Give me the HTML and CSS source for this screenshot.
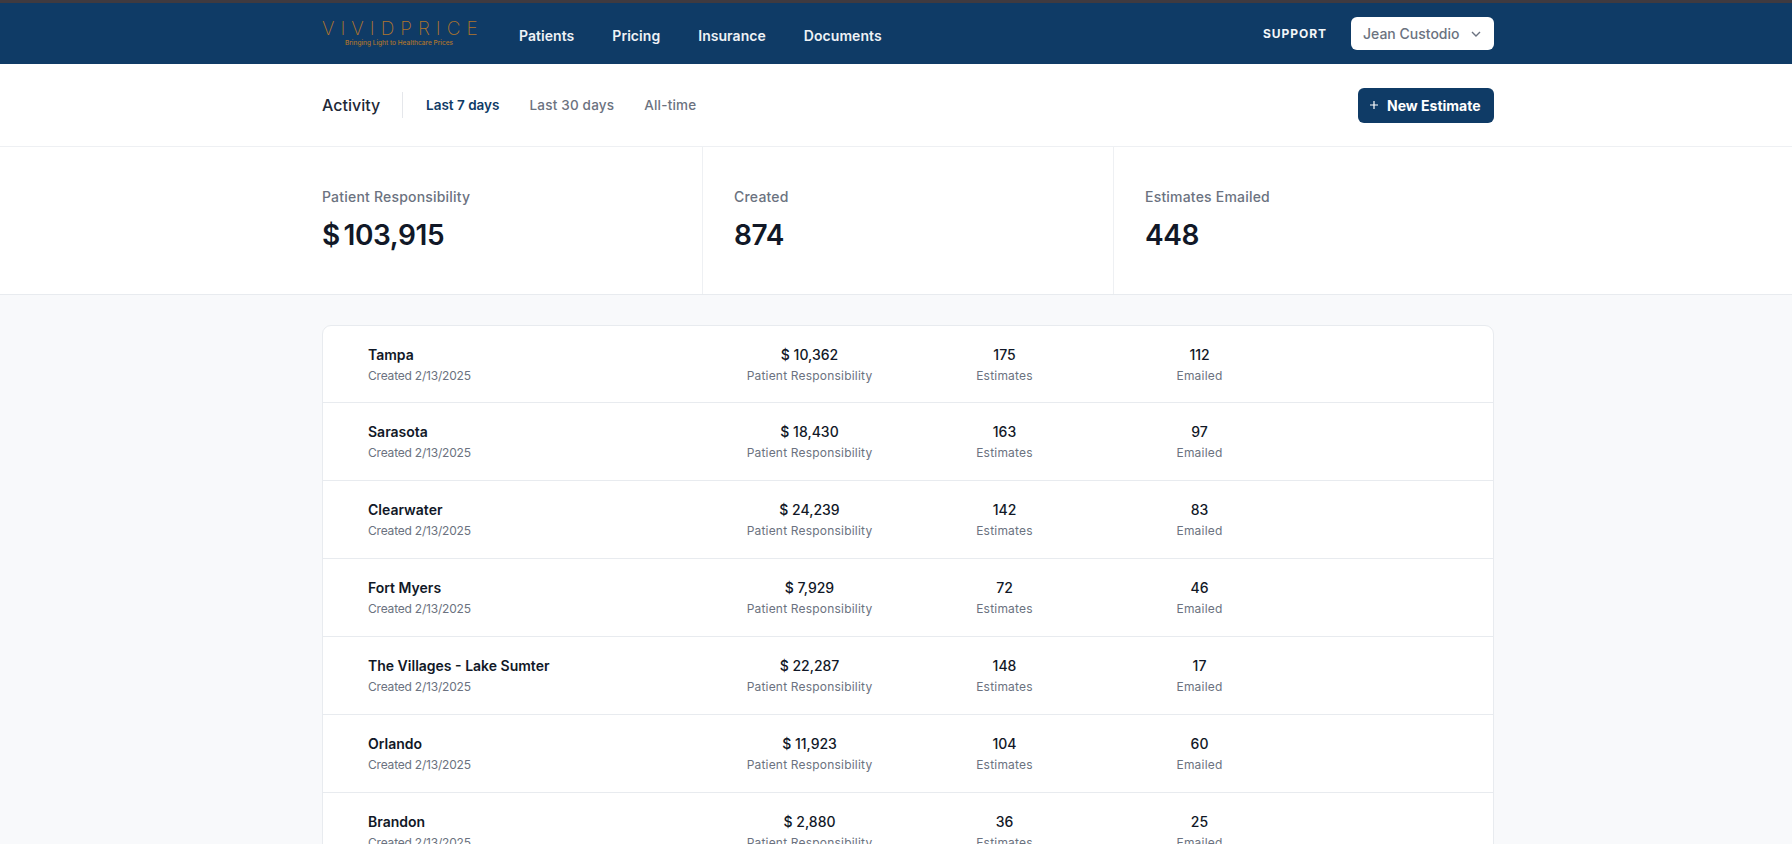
FILE: index.html
```html
<!DOCTYPE html>
<html lang="en">
<head>
<meta charset="utf-8">
<title>VividPrice</title>
<link rel="stylesheet" href="styles.css">
</head>
<body>
<header class="topbar">
  <div class="wrap topbar-in">
    <a class="logo">
      <span class="logo-name">VIVIDPRICE</span>
      <span class="logo-tag">Bringing Light to Healthcare Prices</span>
    </a>
    <nav class="nav">
      <a>Patients</a><a>Pricing</a><a>Insurance</a><a>Documents</a>
    </nav>
    <a class="support">SUPPORT</a>
    <button class="user">Jean Custodio
      <svg class="chev" viewBox="0 0 10 6" width="10" height="6"><path d="M1 1l4 4 4-4" fill="none" stroke="#6b7280" stroke-width="1.4"/></svg>
    </button>
  </div>
</header>
<section class="subbar">
  <div class="wrap subbar-in">
    <h1 class="title">Activity</h1>
    <div class="tabs">
      <a class="tab active">Last 7 days</a><a class="tab">Last 30 days</a><a class="tab">All-time</a>
    </div>
    <button class="new">
      <svg viewBox="0 0 8 8" width="8" height="8"><path d="M4 0v8M0 4h8" stroke="#fff" stroke-width="1.2"/></svg>
      <span>New Estimate</span>
    </button>
  </div>
</section>
<section class="stats">
  <div class="wrap stats-in">
    <div class="stat s1"><div class="stat-label">Patient Responsibility</div><div class="stat-value">$ 103,915</div></div>
    <div class="stat s2"><div class="stat-label">Created</div><div class="stat-value">874</div></div>
    <div class="stat s3"><div class="stat-label">Estimates Emailed</div><div class="stat-value">448</div></div>
  </div>
</section>
<main class="main">
  <div class="wrap">
    <div class="card">
      <div class="row"><div><div class="name">Tampa</div><div class="sub created">Created 2/13/2025</div></div><div class="cell"><div class="num">$ 10,362</div><div class="sub">Patient Responsibility</div></div><div class="cell"><div class="num">175</div><div class="sub">Estimates</div></div><div class="cell"><div class="num">112</div><div class="sub">Emailed</div></div></div>
      <div class="row"><div><div class="name">Sarasota</div><div class="sub created">Created 2/13/2025</div></div><div class="cell"><div class="num">$ 18,430</div><div class="sub">Patient Responsibility</div></div><div class="cell"><div class="num">163</div><div class="sub">Estimates</div></div><div class="cell"><div class="num">97</div><div class="sub">Emailed</div></div></div>
      <div class="row"><div><div class="name">Clearwater</div><div class="sub created">Created 2/13/2025</div></div><div class="cell"><div class="num">$ 24,239</div><div class="sub">Patient Responsibility</div></div><div class="cell"><div class="num">142</div><div class="sub">Estimates</div></div><div class="cell"><div class="num">83</div><div class="sub">Emailed</div></div></div>
      <div class="row"><div><div class="name">Fort Myers</div><div class="sub created">Created 2/13/2025</div></div><div class="cell"><div class="num">$ 7,929</div><div class="sub">Patient Responsibility</div></div><div class="cell"><div class="num">72</div><div class="sub">Estimates</div></div><div class="cell"><div class="num">46</div><div class="sub">Emailed</div></div></div>
      <div class="row"><div><div class="name">The Villages - Lake Sumter</div><div class="sub created">Created 2/13/2025</div></div><div class="cell"><div class="num">$ 22,287</div><div class="sub">Patient Responsibility</div></div><div class="cell"><div class="num">148</div><div class="sub">Estimates</div></div><div class="cell"><div class="num">17</div><div class="sub">Emailed</div></div></div>
      <div class="row"><div><div class="name">Orlando</div><div class="sub created">Created 2/13/2025</div></div><div class="cell"><div class="num">$ 11,923</div><div class="sub">Patient Responsibility</div></div><div class="cell"><div class="num">104</div><div class="sub">Estimates</div></div><div class="cell"><div class="num">60</div><div class="sub">Emailed</div></div></div>
      <div class="row"><div><div class="name">Brandon</div><div class="sub created">Created 2/13/2025</div></div><div class="cell"><div class="num">$ 2,880</div><div class="sub">Patient Responsibility</div></div><div class="cell"><div class="num">36</div><div class="sub">Estimates</div></div><div class="cell"><div class="num">25</div><div class="sub">Emailed</div></div></div>
    </div>
  </div>
</main>
</body>
</html>
```
FILE: styles.css
```css
* { box-sizing: border-box; }
html, body { margin: 0; height: 844px; overflow: hidden; }
body { font-family: Inter, "Open Sans", sans-serif; background: #f8f9fb; color: #111827; }
.wrap { width: 1172px; margin-left: 322px; }

.topbar { height: 64px; background: #0f3b66; border-top: 3px solid #3f3a40; }
.topbar-in { display: flex; align-items: center; height: 61px; }
.logo { width: 196px; display: flex; flex-direction: column; align-items: flex-start; margin-top: -1px; }
.logo-name { font-size: 19px; font-weight: 200; letter-spacing: 6px; color: #b0752c; line-height: 20px; white-space: nowrap; }
.logo-tag { font-size: 6.5px; font-weight: 500; color: #b0752c; line-height: 8px; margin-left: 23px; white-space: nowrap; }
.nav { display: flex; gap: 38px; font-size: 14px; font-weight: 600; letter-spacing: .05px; color: #eef2f6; flex: 1; margin-top: 3px; padding-left: 1px; }
.support { font-size: 12px; font-weight: 700; letter-spacing: .95px; color: #f3f6f9; margin-right: 24px; }
.user { width: 143px; height: 33px; background: #fff; border: 0; border-radius: 6px; font: 500 14px Inter, sans-serif; color: #6b7280; display: flex; align-items: center; justify-content: space-between; padding: 0 13px 0 12px; }

.subbar { height: 83px; background: #fff; border-bottom: 1px solid #eef0f3; }
.subbar-in { display: flex; align-items: center; height: 82px; }
.title { margin: 0; font-size: 16px; font-weight: 500; color: #1f2937; width: 81px; height: 26px; line-height: 26px; border-right: 1px solid #e5e7eb; }
.tabs { display: flex; gap: 30px; flex: 1; padding-left: 23px; font-size: 13.5px; font-weight: 500; letter-spacing: .2px; color: #6b7280; }
.tab.active { color: #0f3b66; font-weight: 600; letter-spacing: 0; }
.new { width: 136px; height: 35px; border: 0; border-radius: 6px; background: #0f3b66; color: #fff; font: 700 14px Inter, sans-serif; display: flex; align-items: center; gap: 9px; padding: 0 12px; white-space: nowrap; }

.stats { height: 148px; background: #fff; border-bottom: 1px solid #e8ebef; }
.stats-in { display: flex; height: 147px; }
.stat { padding-top: 41px; }
.s1 { width: 380px; }
.s2 { width: 411px; padding-left: 31px; border-left: 1px solid #eef0f3; }
.s3 { flex: 1; padding-left: 31px; border-left: 1px solid #eef0f3; }
.stat-label { font-size: 14px; font-weight: 500; letter-spacing: .2px; color: #6b7280; line-height: 18px; }
.stat-value { font-size: 28px; font-weight: 600; color: #111827; line-height: 36px; margin-top: 11px; letter-spacing: -.4px; word-spacing: -3px; }

.main { padding-top: 30px; }
.card { background: #fff; border: 1px solid #e8ebef; border-radius: 9px 9px 0 0; }
.row { height: 78px; display: grid; grid-template-columns: 344px 195px 195px 195px; padding: 19px 0 0 45px; border-bottom: 1px solid #e8ebef; }
.row:first-child { height: 77px; }
.row:last-child { border-bottom: 0; }
.cell { text-align: center; }
.name { font-size: 14px; font-weight: 600; color: #111827; line-height: 20px; }
.num { font-size: 14px; font-weight: 500; color: #111827; line-height: 20px; }
.sub { font-size: 12px; font-weight: 400; letter-spacing: .2px; color: #6b7280; line-height: 16px; margin-top: 3px; white-space: nowrap; }
.sub.created { letter-spacing: -.2px; }
```
